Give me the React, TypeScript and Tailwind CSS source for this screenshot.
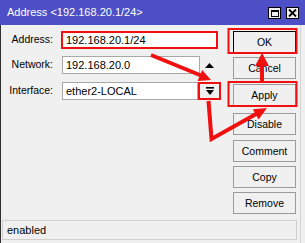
import React from "react";

function Btn({ label, className = "" }: { label: string; className?: string }) {
  return (
    <div
      className={`w-[63px] h-[22px] flex items-center justify-center border border-[#9a9a9a] bg-[#f0f0f0] text-[10.5px] text-black leading-none ${className}`}
    >
      {label}
    </div>
  );
}

export default function App() {
  return (
    <div
      className="relative w-[305px] h-[243px] overflow-hidden bg-[#f0f0f0] text-black"
      style={{ fontFamily: "'Liberation Sans', Arial, sans-serif" }}
    >
      {/* title bar */}
      <div className="h-[25px] bg-[#4c4fc5] flex items-center pl-[7px] pr-[6px]">
        <span className="text-white text-[11px] leading-none">Address &lt;192.168.20.1/24&gt;</span>
        <div className="ml-auto flex gap-[5px] mt-[1px]">
          <div className="w-[13px] h-[12px] bg-[#f0f0f0] border border-black flex items-center justify-center">
            <div className="w-[8px] h-[7px] border border-black border-t-2" />
          </div>
          <div className="w-[13px] h-[12px] bg-[#f0f0f0] border border-black flex items-center justify-center">
            <svg width="9" height="8" viewBox="0 0 9 8">
              <path d="M1 0.5 L8 7.5 M8 0.5 L1 7.5" stroke="#000" strokeWidth="1.8" />
            </svg>
          </div>
        </div>
      </div>

      {/* body */}
      <div className="w-[301px] h-[218px] border-l border-l-[#303030] border-r border-r-[#d4d4d4] flex flex-col">
        <div className="flex h-[189px]">
          {/* form */}
          <div className="w-[231px] flex flex-col pt-[6px] gap-[7px]">
            <div className="flex items-center h-[18px]">
              <div className="w-[53px] text-right text-[10.5px] pr-[1px]">Address:</div>
              <div className="ml-[7px] w-[157px] h-[18px] bg-white border-2 border-[#f01010] flex items-center pl-[3px] text-[11px]">
                192.168.20.1/24
              </div>
            </div>
            <div className="flex items-center h-[18px]">
              <div className="w-[53px] text-right text-[10.5px] pr-[1px]">Network:</div>
              <div className="ml-[8px] w-[138px] h-[18px] bg-white border border-[#a8a8a8] flex items-center pl-[3px] text-[11px]">
                192.168.20.0
              </div>
              <svg className="ml-[5px]" width="9" height="5" viewBox="0 0 9 5">
                <path d="M0 5 L4.5 0 L9 5 Z" fill="#000" />
              </svg>
            </div>
            <div className="flex items-center h-[18px] mt-[1px]">
              <div className="w-[53px] text-right text-[10.5px] pr-[1px]">Interface:</div>
              <div className="ml-[8px] w-[136px] h-[18px] bg-white border border-[#a8a8a8] flex items-center pl-[3px] text-[11px]">
                ether2-LOCAL
              </div>
              <div className="w-[23px] h-[18px] bg-[#f0f0f0] border-2 border-[#f01010] flex items-center justify-center">
                <svg width="8" height="8" viewBox="0 0 8 8">
                  <rect x="0" y="0" width="8" height="1.6" fill="#000" />
                  <path d="M0 3 L8 3 L4 8 Z" fill="#000" />
                </svg>
              </div>
            </div>
          </div>
          {/* buttons */}
          <div className="flex flex-col pt-[6px] ml-[1px]">
            <Btn label="OK" className="border-black" />
            <Btn label="Cancel" className="mt-[4px]" />
            <Btn label="Apply" className="mt-[5px]" />
            <Btn label="Disable" className="mt-[7px]" />
            <Btn label="Comment" className="mt-[5px]" />
            <Btn label="Copy" className="mt-[4px]" />
            <Btn label="Remove" className="mt-[4px]" />
          </div>
        </div>
        <div className="ml-[1px] mt-[6px] w-[295px] h-[20px] border border-[#cfcfcf] flex items-center pl-[4px] text-[11px]">
          enabled
        </div>
      </div>

      {/* annotations */}
      <svg className="absolute inset-0 pointer-events-none" width="305" height="243" viewBox="0 0 305 243">
        <rect x="228.5" y="29" width="68" height="24" fill="none" stroke="#f01010" strokeWidth="2" />
        <rect x="228.5" y="82" width="68" height="24" fill="none" stroke="#f01010" strokeWidth="2" />
        {/* arrow 1 */}
        <line x1="151" y1="55" x2="201" y2="75.5" stroke="#f01010" strokeWidth="4" />
        <path d="M211 80 L197.6 80.9 L202.2 69.9 Z" fill="#f01010" />
        {/* arrow 2 */}
        <polyline points="208.5,101 211.5,139 257,113.5" fill="none" stroke="#f01010" strokeWidth="4" strokeLinejoin="miter" />
        <path d="M267 108 L258.6 119.6 L252.8 109.2 Z" fill="#f01010" />
        {/* arrow 3 */}
        <line x1="262" y1="82" x2="262" y2="64" stroke="#f01010" strokeWidth="4" />
        <path d="M262 53 L255 66 L269 66 Z" fill="#f01010" />
      </svg>
    </div>
  );
}
